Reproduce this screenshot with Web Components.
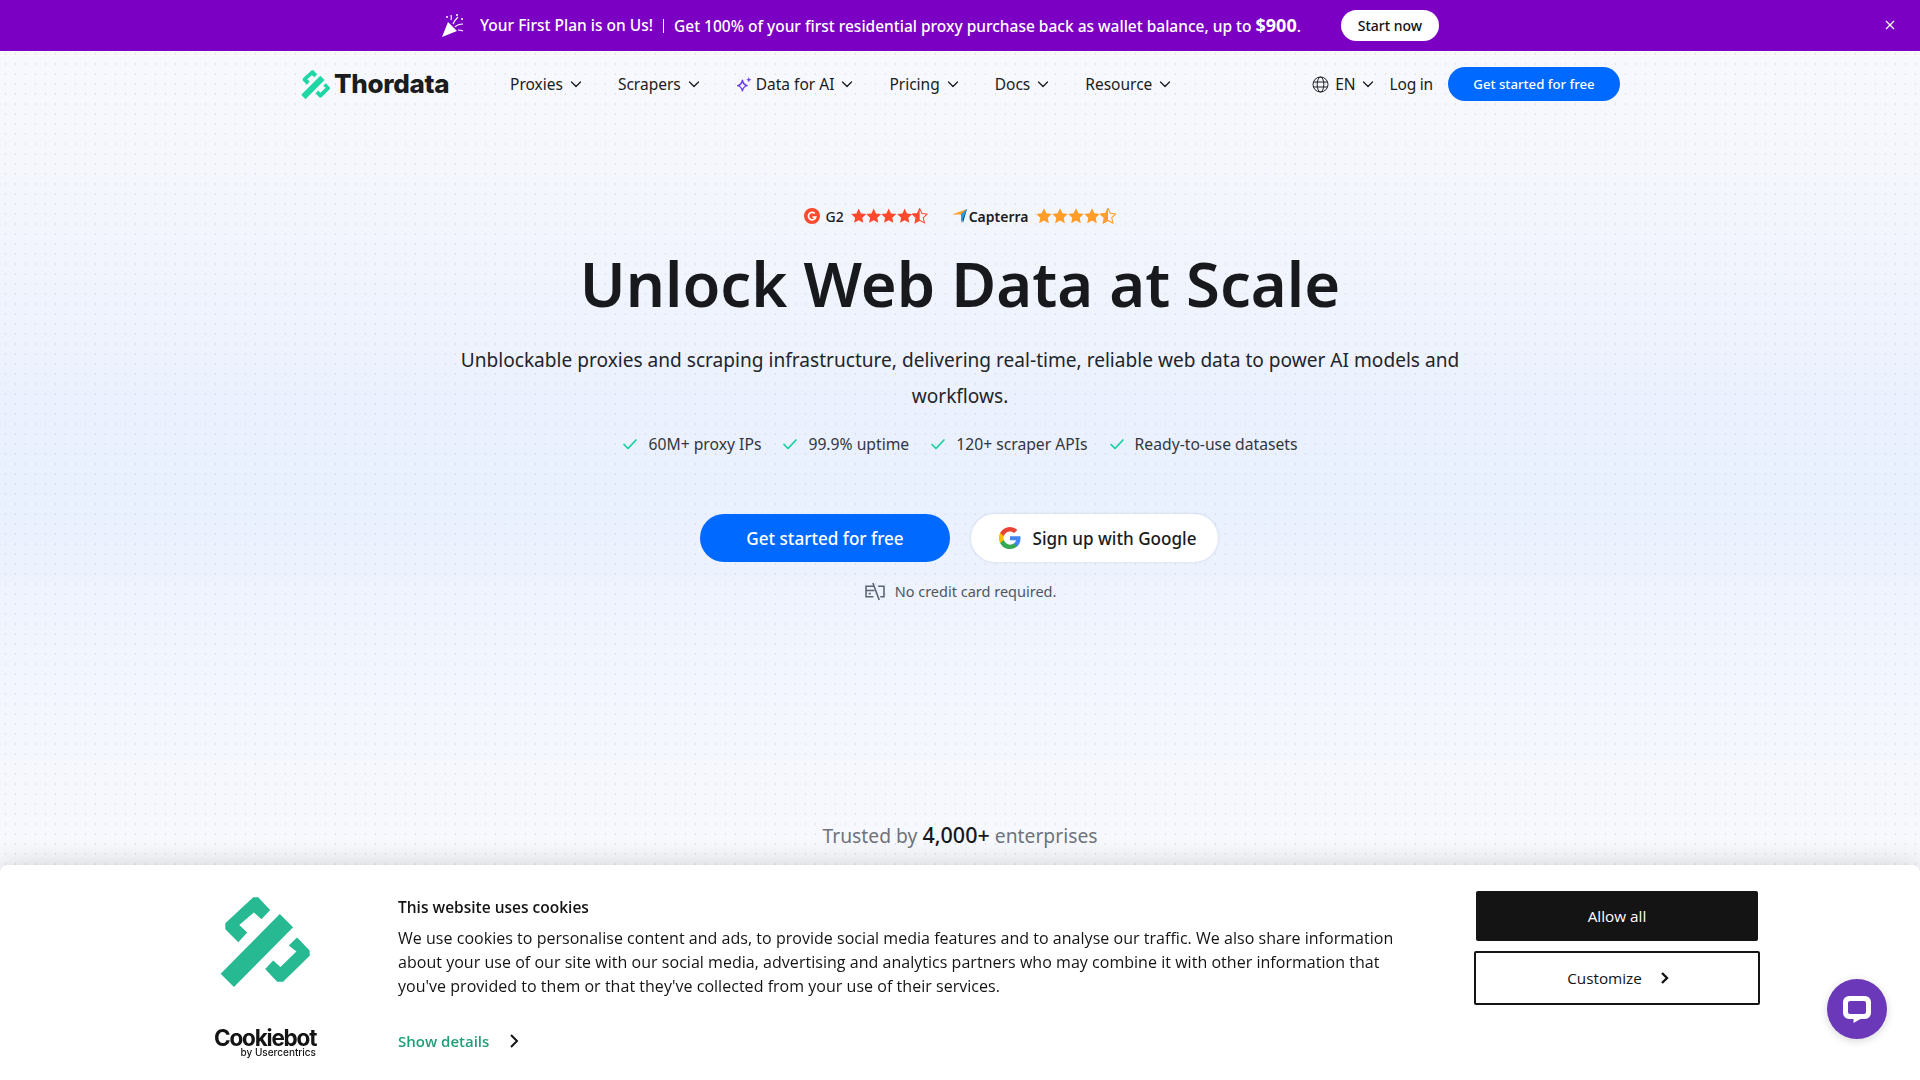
<!doctype html>
<html lang="en">
<head>
<meta charset="utf-8">
<title>Thordata</title>
<style>
  html, body { margin:0; height:100%; overflow:hidden; }
  body {
    font-family: "Noto Sans", "Liberation Sans", sans-serif;
    color:#1a1c20;
    background-color:#f8f9fd;
  }
</style>
</head>
<body>
<th-page>
  <th-promo-bar></th-promo-bar>
  <th-site-nav></th-site-nav>
  <th-hero></th-hero>
</th-page>
<th-cookie-banner></th-cookie-banner>
<th-chat-fab></th-chat-fab>

<script>
// shared marks
const MARK = `<path d="M190 52h15l36 38-26 28-23-20-44 37 24 23-27 29-39-39v-18zM270 102l40 40-178 180-40-40zM322 173l38 39v16l-80 78h-18l-36-38 24-26 22 20 48-47-23-18z"/>`;
const CHEV = `<svg width="12" height="12" viewBox="0 0 12 12" fill="none" stroke="currentColor" stroke-width="1.3" stroke-linecap="round" stroke-linejoin="round"><path d="M1.5 4l4.5 4.5L10.5 4"/></svg>`;
const CHECK = `<svg width="16" height="16" viewBox="0 0 16 16" fill="none" stroke="#14cf9f" stroke-width="1.7" stroke-linecap="round" stroke-linejoin="round"><path d="M2 8.5l4 4 8-8.5"/></svg>`;
const STAR = "M8 .8l2.2 4.700 5.100.6-3.800 3.500 1 5.100L8 12.200l-4.500 2.500 1-5.100L.7 6.100l5.100-.6z";

function stars(color, w) {
  let out = "";
  for (let i = 0; i < 4; i++) out += `<svg width="${w}" height="16" viewBox=".5 .5 15 15"><path d="${STAR}" fill="${color}"/></svg>`;
  out += `<svg width="${w}" height="16" viewBox=".5 .5 15 15"><path d="${STAR}" fill="none" stroke="${color}" stroke-width="1"/><path d="M8 .8v11.400l-4.500 2.500 1-5.100L.7 6.100l5.100-.6z" fill="${color}"/></svg>`;
  return out;
}

class ThElement extends HTMLElement {
  constructor() {
    super();
    this.attachShadow({ mode: "open" });
    this.shadowRoot.innerHTML = this.render();
  }
}

class ThPage extends ThElement {
  render() {
    const dot = `url("data:image/svg+xml,%3Csvg xmlns='http://www.w3.org/2000/svg' width='10' height='10'%3E%3Crect x='5' y='3' width='1' height='2' fill='%23828796' fill-opacity='.2'/%3E%3C/svg%3E")`;
    return `<style>
      :host {
        display:block; height:1080px;
        background-image:
          ${dot},
          linear-gradient(180deg, #f8f9fd 0, #f7f8fd 100px, #f2f5fd 250px, #ebf1fe 400px, #e9f0fe 500px, #f1f5fe 640px, #f8f9fd 860px);
        background-size:10px 10px, 100% 100%;
      }
    </style><slot></slot>`;
  }
}

class ThPromoBar extends ThElement {
  render() {
    return `<style>
      :host {
        display:flex; align-items:center; justify-content:center; position:relative;
        height:51px; background:#7c00c4; color:#fff; font-size:15.500px; font-weight:500;
      }
      .row { display:flex; align-items:center; margin-left:-40px; }
      svg.party { margin-right:14px; }
      .txt { padding-bottom:2px; }
      .sep { width:1px; height:14px; background:#fff; margin:0 10px; }
      b { font-size:18px; font-weight:700; }
      a { margin-left:40px; background:#fff; color:#111; height:31px; width:98px; border-radius:16px;
          display:flex; align-items:center; justify-content:center; font-size:14px; }
      .x { position:absolute; right:24px; top:19px; }
    </style>
    <div class="row">
      <svg class="party" width="25" height="25" viewBox="0 0 25 25" fill="#fff">
        <path d="M7 9l9 9-15 6z"/>
        <path d="M12 11c1-3 3-5 5-7M14 14c2-2 5-3 8-3M10 7c.500-2 .500-3 0-5M17 17c2 0 3 0 5 1" stroke="#fff" stroke-width="1.200" fill="none"/>
        <circle cx="6" cy="4" r="1"/><circle cx="21" cy="6" r="1"/><circle cx="16" cy="2" r="1"/>
      </svg>
      <span class="txt">Your First Plan is on Us!</span><span class="sep"></span>
      <span class="txt">Get 100% of your first residential proxy purchase back as wallet balance, up to <b>$900</b>.</span>
      <a>Start now</a>
    </div>
    <svg class="x" width="12" height="12" viewBox="0 0 12 12" stroke="#fff" stroke-width="1.300"><path d="M2 2l8 8M10 2l-8 8"/></svg>`;
  }
}

class ThNavItem extends ThElement {
  render() {
    return `<style>
      :host { display:inline-flex; align-items:center; gap:7px; font-size:15.500px; color:#1a1c20; white-space:nowrap; }
    </style><slot></slot>${CHEV}`;
  }
}
customElements.define("th-nav-item", ThNavItem);

class ThSiteNav extends ThElement {
  render() {
    return `<style>
      :host { display:flex; align-items:center; height:66px; padding:0 300px 0 301px; font-size:15.500px; }
      .brand { display:flex; align-items:center; gap:3px; width:209px; }
      .brand span { font:800 26px/1 Inter, sans-serif; letter-spacing:-.3px; color:#1a1c20; }
      nav { display:flex; gap:36px; flex:1; }
      .right { display:flex; align-items:center; }
      .lang { display:flex; align-items:center; gap:6px; margin-right:16px; }
      .login { margin-right:15px; letter-spacing:-.2px; }
      .cta { background:#0069ff; color:#fff; width:172px; height:34px; border-radius:17px; font-size:13.200px; font-weight:500;
             display:flex; align-items:center; justify-content:center; }
    </style>
    <div class="brand">
      <svg width="30" height="31" viewBox="90 40 280 290" fill="#1fd6a5">${MARK}</svg><span>Thordata</span>
    </div>
    <nav>
      <th-nav-item>Proxies</th-nav-item>
      <th-nav-item>Scrapers</th-nav-item>
      <th-nav-item><svg width="16" height="17" viewBox="0 0 15 16" fill="none" stroke="#6a3df0" stroke-width="1.300" stroke-linejoin="round" style="margin-right:-3px"><path d="M6 4c.600 3 1.800 4.400 4.500 5-2.700.600-3.900 2-4.500 5-.600-3-1.800-4.400-4.500-5C4.200 8.400 5.400 7 6 4z"/><path d="M12 1l.700 1.800 1.800.700-1.800.700L12 6l-.700-1.800-1.800-.700 1.800-.700z" fill="#6a3df0" stroke="none"/></svg>Data for AI</th-nav-item>
      <th-nav-item>Pricing</th-nav-item>
      <th-nav-item>Docs</th-nav-item>
      <th-nav-item>Resource</th-nav-item>
    </nav>
    <div class="right">
      <div class="lang">
        <svg width="17" height="17" viewBox="0 0 17 17" fill="none" stroke="#1a1c20" stroke-width="1"><circle cx="8.500" cy="8.500" r="7.500"/><ellipse cx="8.500" cy="8.500" rx="3.300" ry="7.500"/><path d="M1.500 6h14M1.500 11h14"/></svg>
        <span>EN</span>${CHEV}
      </div>
      <span class="login">Log in</span>
      <a class="cta">Get started for free</a>
    </div>`;
  }
}

class ThRatings extends ThElement {
  render() {
    return `<style>
      :host { display:flex; justify-content:center; align-items:center; height:24px; font-size:14px; font-weight:500; color:#1a1c20; }
      .group { display:flex; align-items:center; }
      .stars { display:flex; gap:0; }
      .g2 { margin:0 7px 0 6px; }
      .cap { margin:0 8px 0 1px; font-weight:600; }
      .spacer { width:24px; }
    </style>
    <div class="group">
      <svg width="16" height="16" viewBox="0 0 16 16"><circle cx="8" cy="8" r="8" fill="#ff492c"/><path d="M10.800 5.500A3.700 3.700 0 1 0 11.700 9.200H8.500" fill="none" stroke="#fff" stroke-width="1.700"/></svg>
      <span class="g2">G2</span><span class="stars">${stars("#ff492c", 15.4)}</span>
    </div>
    <span class="spacer"></span>
    <div class="group">
      <svg width="16" height="16" viewBox="0 0 16 16"><path d="M0 6.500L9 6.500 15 1z" fill="#ff9d28"/><path d="M9 6.500L15 1 11 15z" fill="#044d80"/><path d="M9 6.500L15 1 9 15z" fill="#2a9fe0"/></svg>
      <span class="cap">Capterra</span><span class="stars">${stars("#ff9d28", 16)}</span>
    </div>`;
  }
}

class ThCheck extends ThElement {
  render() {
    return `<style>
      :host { display:inline-flex; align-items:center; gap:10px; font-size:15.700px; color:#33373d; white-space:nowrap; }
    </style>${CHECK}<slot></slot>`;
  }
}
customElements.define("th-check", ThCheck);

class ThHero extends ThElement {
  render() {
    return `<style>
      :host { display:flex; flex-direction:column; align-items:center; padding-top:87px; text-align:center; }
      h1 { margin:13px 0 0; font:600 61.500px/84px "Noto Sans", sans-serif; color:#17191d; }
      p { margin:17px 0 0; width:1030px; font-size:19.100px; line-height:36px; color:#22252a; }
      .checks { display:flex; gap:21px; margin-top:18px; height:24px; }
      .actions { display:flex; gap:21px; margin:58px 2px 0 0; }
      .btn { height:48px; border-radius:24px; display:flex; align-items:center; justify-content:center; font-size:17.100px; font-weight:500; box-sizing:border-box; }
      .primary { width:250px; background:#0069ff; color:#fff; }
      .google { width:247px; background:#fff; color:#1a1c20; gap:12px; padding-left:6px; box-shadow:0 0 3px rgba(30,50,90,.16); }
      .note { display:flex; align-items:center; gap:9px; margin-top:17px; height:24px; font-size:14.500px; color:#4f5662; }
      .trusted { margin-top:218px; font-size:19.300px; color:#6f747c; line-height:28px; }
      .trusted b { font-size:21.500px; font-weight:500; color:#17191d; }
    </style>
    <th-ratings></th-ratings>
    <h1>Unlock Web Data at Scale</h1>
    <p>Unblockable proxies and scraping infrastructure, delivering real-time, reliable web data to power AI models and workflows.</p>
    <div class="checks">
      <th-check>60M+ proxy IPs</th-check>
      <th-check>99.9% uptime</th-check>
      <th-check>120+ scraper APIs</th-check>
      <th-check>Ready-to-use datasets</th-check>
    </div>
    <div class="actions">
      <a class="btn primary">Get started for free</a>
      <a class="btn google">
        <svg width="22" height="22" viewBox="0 0 24 24"><path fill="#4285F4" d="M23.500 12.300c0-.800-.100-1.600-.200-2.300H12v4.500h6.500a5.500 5.500 0 0 1-2.400 3.600v3h3.900c2.200-2.100 3.500-5.200 3.500-8.800z"/><path fill="#34A853" d="M12 24c3.200 0 6-1.100 8-2.900l-3.900-3c-1.100.700-2.500 1.200-4.100 1.200-3.100 0-5.800-2.100-6.700-5H1.200v3.100A12 12 0 0 0 12 24z"/><path fill="#FBBC05" d="M5.300 14.300a7.200 7.200 0 0 1 0-4.600V6.600H1.200a12 12 0 0 0 0 10.800z"/><path fill="#EA4335" d="M12 4.800c1.800 0 3.300.600 4.600 1.800l3.400-3.400A12 12 0 0 0 1.200 6.600l4.100 3.100c.900-2.800 3.600-4.900 6.700-4.900z"/></svg>
        Sign up with Google
      </a>
    </div>
    <div class="note">
      <svg width="22" height="19" viewBox="0 0 20 18" fill="none" stroke="#5b6472" stroke-width="1.500"><path d="M9 4H1.500v10h7M13 4h5.500v10H15M1.500 8h8M4 11h2"/><path d="M8 1l6 16"/></svg>
      No credit card required.
    </div>
    <div class="trusted">Trusted by <b>4,000+</b> enterprises</div>`;
  }
}

class ThCookieBanner extends ThElement {
  render() {
    return `<style>
      :host {
        position:fixed; left:0; right:0; bottom:0; height:215px; box-sizing:border-box;
        display:flex; background:#fff; border-radius:8px 8px 0 0;
        box-shadow:0 0 28px rgba(0,0,0,.16);
        font-family:"Open Sans", sans-serif; color:#141414;
      }
      .brand { width:398px; flex:none; box-sizing:border-box; padding:28px 0 0 214px; }
      .brand svg { display:block; margin-left:6px; }
      .wordmark { margin-top:38px; text-align:right; color:#141414; width:102px; line-height:1; }
      .wordmark b { display:block; font:700 22.500px/19px Inter, sans-serif; letter-spacing:-1.200px; }
      .wordmark small { display:block; font:500 10px/10px Inter, sans-serif; }
      .copy { width:1010px; flex:none; padding-top:32px; }
      h2 { margin:0; font-size:15.500px; line-height:20px; font-weight:600; }
      p { margin:9px 0 0; font-size:16px; line-height:24px; letter-spacing:.03px; }
      .details { margin-top:33px; display:flex; align-items:center; gap:20px; color:#1f9e78; font-size:15px; font-weight:600; line-height:20px; }
      .actions { margin-left:66px; padding-top:26px; width:286px; display:flex; flex-direction:column; align-items:center; gap:10px; }
      .btn { box-sizing:border-box; display:flex; align-items:center; justify-content:center; border-radius:2px; font-size:15.300px; font-weight:500; }
      .allow { width:282px; height:50px; background:#141414; color:#fff; }
      .custom { width:286px; height:54px; background:#fff; border:2px solid #141414; gap:18px; padding-left:2px; }
    </style>
    <div class="brand">
      <svg width="93" height="97" viewBox="90 40 280 290" fill="#27b992">${MARK}</svg>
      <div class="wordmark"><b>Cookiebot</b><small>by Usercentrics</small></div>
    </div>
    <div class="copy">
      <h2>This website uses cookies</h2>
      <p>We use cookies to personalise content and ads, to provide social media features and to analyse our traffic. We also share information about your use of our site with our social media, advertising and analytics partners who may combine it with other information that you've provided to them or that they've collected from your use of their services.</p>
      <div class="details">Show details
        <svg width="10" height="14" viewBox="0 0 10 14" fill="none" stroke="#141414" stroke-width="2"><path d="M2 1l6 6-6 6"/></svg>
      </div>
    </div>
    <div class="actions">
      <a class="btn allow">Allow all</a>
      <a class="btn custom">Customize
        <svg width="9" height="12" viewBox="0 0 9 12" fill="none" stroke="#141414" stroke-width="2.400"><path d="M2 1l5 5-5 5"/></svg>
      </a>
    </div>`;
  }
}

class ThChatFab extends ThElement {
  render() {
    return `<style>
      :host { position:fixed; left:1827px; top:979px; width:60px; height:60px; border-radius:50%;
              background:#6a38b8; display:flex; align-items:center; justify-content:center;
              box-shadow:0 2px 8px rgba(0,0,0,.16); }
    </style>
    <svg width="30" height="30" viewBox="0 0 30 30" fill-rule="evenodd"><path fill="#fff" d="M7 2h16a6 6 0 0 1 6 6v11a6 6 0 0 1-6 6h-4.500L11.500 29v-4H7a6 6 0 0 1-6-6V8a6 6 0 0 1 6-6zM8 7a2 2 0 0 0-2 2v9a2 2 0 0 0 2 2h14a2 2 0 0 0 2-2V9a2 2 0 0 0-2-2z"/></svg>`;
  }
}

customElements.define("th-page", ThPage);
customElements.define("th-promo-bar", ThPromoBar);
customElements.define("th-site-nav", ThSiteNav);
customElements.define("th-ratings", ThRatings);
customElements.define("th-hero", ThHero);
customElements.define("th-cookie-banner", ThCookieBanner);
customElements.define("th-chat-fab", ThChatFab);
</script>
</body>
</html>
